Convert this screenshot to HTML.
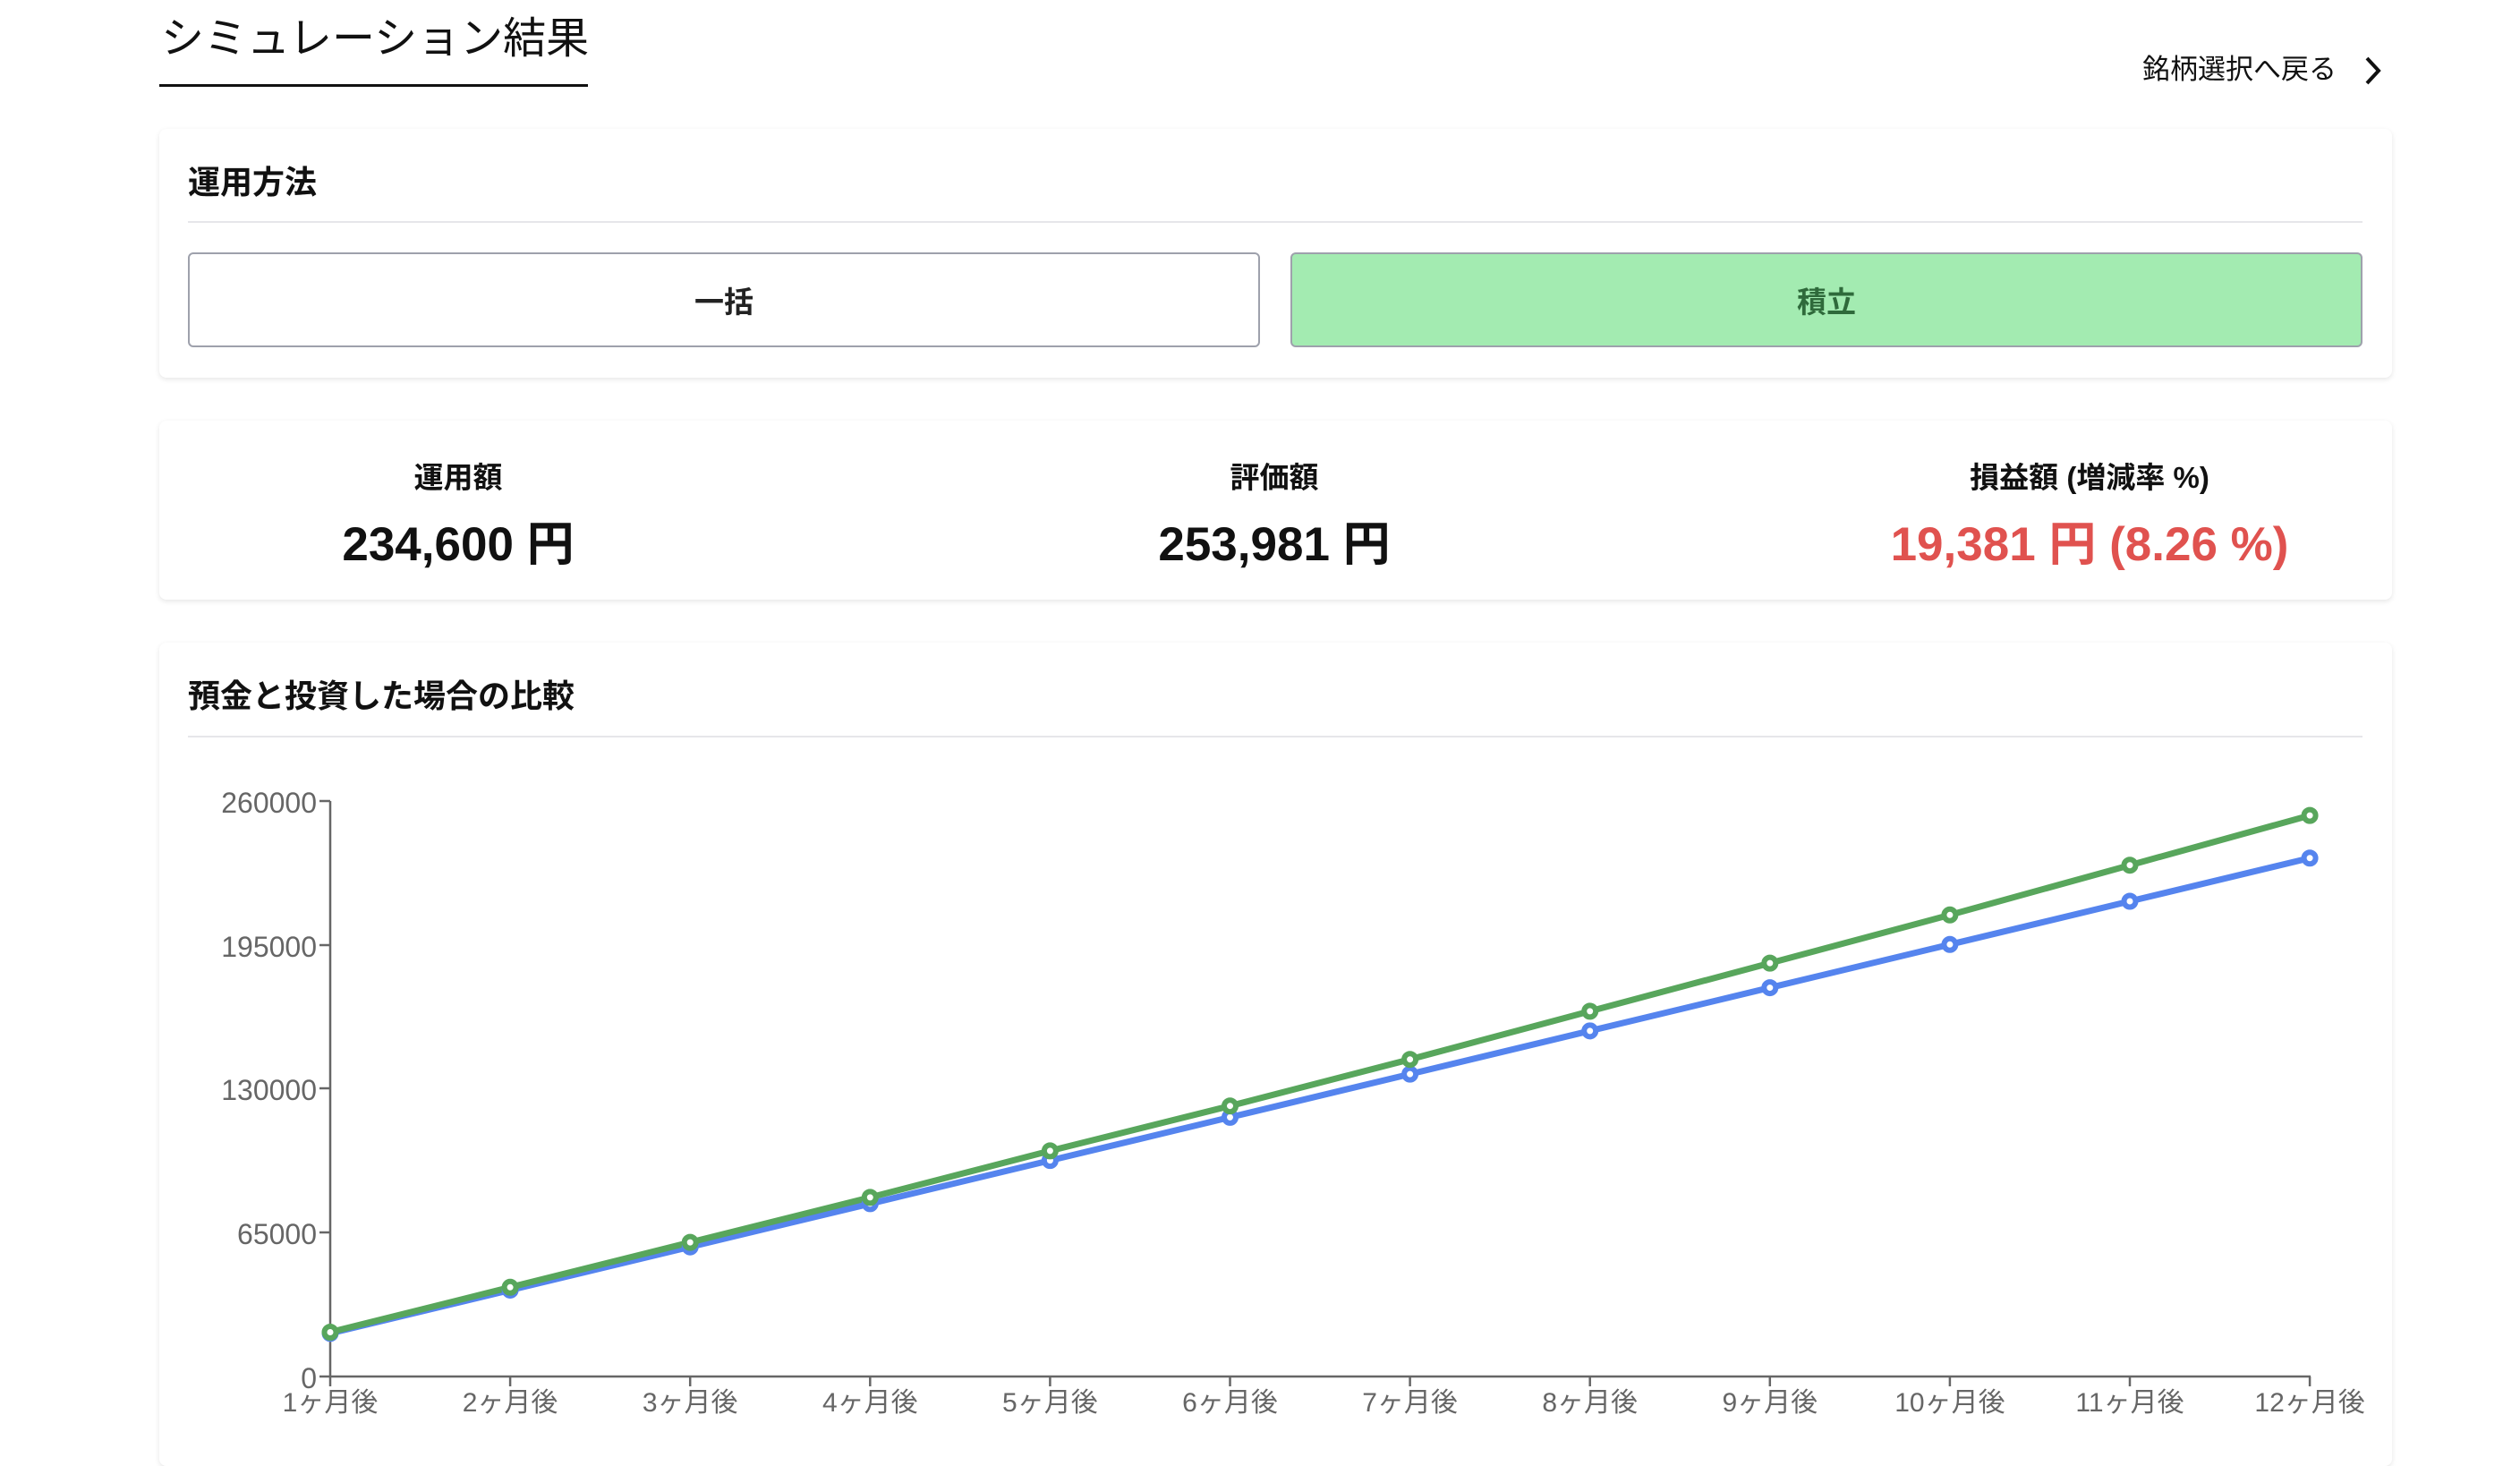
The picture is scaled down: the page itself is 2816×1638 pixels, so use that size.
<!DOCTYPE html>
<html><head><meta charset="utf-8"><style>
*{box-sizing:border-box;margin:0;padding:0}
body{width:2816px;height:1602px;background:#fff;font-family:"Liberation Sans","Noto Sans CJK JP",sans-serif;color:#111;position:relative;overflow:hidden}
.abs{position:absolute}
.card{position:absolute;background:#fff;border-radius:8px;box-shadow:0 2px 6px rgba(0,0,0,0.10);left:178px;width:2495px}
.h{font-weight:700;font-size:36px;line-height:1}
.btn{position:absolute;top:138px;height:106px;border:2px solid #9ea1ac;border-radius:6px;display:flex;align-items:center;justify-content:center;font-weight:700;font-size:33px}
.col{position:absolute;top:0;width:700px;text-align:center}
.lab{font-weight:700;font-size:33px;position:absolute;top:37px;width:100%}
.val{font-weight:700;font-size:53px;position:absolute;top:96px;width:100%}
</style></head><body>
<div class="abs" style="left:180px;top:14px;font-size:48px;line-height:60px;color:#111">シミュレーション結果</div>
<div class="abs" style="left:178px;top:94px;width:479px;height:3px;background:#111"></div>
<div class="abs" style="left:2394px;top:60px;font-size:31px;line-height:36px;color:#111">銘柄選択へ戻る</div>
<svg class="abs" style="left:2640px;top:62px" width="24" height="34" viewBox="0 0 24 34"><path d="M5 3 L18 17 L5 31" fill="none" stroke="#111" stroke-width="4"/></svg>

<div class="card" style="top:144px;height:278px">
  <div class="abs h" style="left:32px;top:42px">運用方法</div>
  <div class="abs" style="left:32px;top:103px;width:2430px;height:2px;background:#e6e6ea"></div>
  <div class="btn" style="left:32px;width:1198px;background:#fff;color:#222">一括</div>
  <div class="btn" style="left:1264px;width:1198px;background:#a3ebb1;color:#2f6a3b">積立</div>
</div>

<div class="card" style="top:470px;height:200px">
  <div class="col" style="left:-16px"><div class="lab">運用額</div><div class="val">234,600 円</div></div>
  <div class="col" style="left:896px"><div class="lab">評価額</div><div class="val">253,981 円</div></div>
  <div class="col" style="left:1807px"><div class="lab">損益額 (増減率 %)</div><div class="val" style="color:#e0524f">19,381 円 (8.26 %)</div></div>
</div>

<div class="card" style="top:718px;height:920px">
  <div class="abs h" style="left:32px;top:42px">預金と投資した場合の比較</div>
  <div class="abs" style="left:32px;top:104px;width:2430px;height:2px;background:#e6e6ea"></div>
</div>

<svg class="abs" style="left:0;top:0" width="2816" height="1602">
<g stroke="#666" stroke-width="2.5" fill="none">
<line x1="369" y1="895" x2="369" y2="1538"/>
<line x1="369" y1="1538" x2="2582" y2="1538"/>
<line x1="357" y1="895" x2="369" y2="895"/>
<line x1="357" y1="1056" x2="369" y2="1056"/>
<line x1="357" y1="1216" x2="369" y2="1216"/>
<line x1="357" y1="1377" x2="369" y2="1377"/>
<line x1="357" y1="1538" x2="369" y2="1538"/>
</g>
<g fill="#666" font-size="32" text-anchor="end" font-family="Liberation Sans,sans-serif">
<text x="354" y="908">260000</text>
<text x="354" y="1069">195000</text>
<text x="354" y="1229">130000</text>
<text x="354" y="1390">65000</text>
<text x="354" y="1551">0</text>
</g>
<g id="xt" fill="#666" font-size="30" text-anchor="middle" font-family="Liberation Sans,Noto Sans CJK JP,sans-serif"></g>
<g id="tk" stroke="#666" stroke-width="2.5"></g>
<polyline id="bl" fill="none" stroke="#5584ee" stroke-width="7" stroke-linejoin="round"/>
<polyline id="gl" fill="none" stroke="#58a65c" stroke-width="7" stroke-linejoin="round"/>
<g id="bc"></g><g id="gc"></g>
</svg>
<script>
var ns="http://www.w3.org/2000/svg";
var gy=[1488.5,1438.3,1388.1,1337.9,1285.9,1235.7,1183.7,1129.9,1076.1,1022.3,966.7,911.1];
var bp=[],gp=[];
for(var k=0;k<12;k++){
 var x=369+k*201.1;
 var by=1538-(k+1)*48.27;
 bp.push(x+","+by);gp.push(x+","+gy[k]);
 var t=document.createElementNS(ns,"text");t.setAttribute("x",x);t.setAttribute("y",1577);t.textContent=(k+1)+"ヶ月後";document.getElementById("xt").appendChild(t);
 var l=document.createElementNS(ns,"line");l.setAttribute("x1",x);l.setAttribute("x2",x);l.setAttribute("y1",1538);l.setAttribute("y2",1549);document.getElementById("tk").appendChild(l);
 [[by,"#5584ee","bc"],[gy[k],"#58a65c","gc"]].forEach(function(a){
  var c=document.createElementNS(ns,"circle");c.setAttribute("cx",x);c.setAttribute("cy",a[0]);c.setAttribute("r",6.5);c.setAttribute("fill","#fff");c.setAttribute("stroke",a[1]);c.setAttribute("stroke-width",6);document.getElementById(a[2]).appendChild(c);
 });
}
document.getElementById("bl").setAttribute("points",bp.join(" "));
document.getElementById("gl").setAttribute("points",gp.join(" "));
</script>
</body></html>
